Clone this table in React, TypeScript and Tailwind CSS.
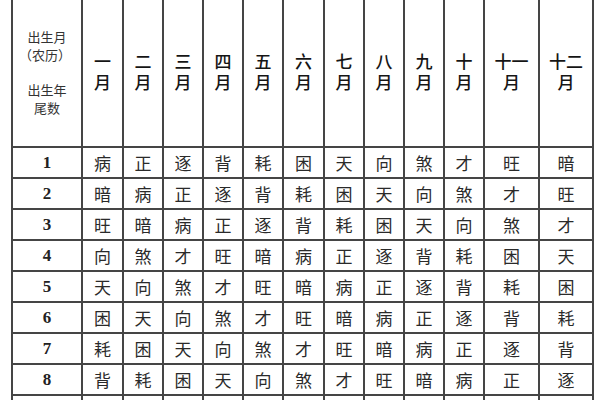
import React from 'react';

// 出生年尾数 × 农历出生月 对照表
const MONTHS: [string, string][] = [
  ['一', '月'],
  ['二', '月'],
  ['三', '月'],
  ['四', '月'],
  ['五', '月'],
  ['六', '月'],
  ['七', '月'],
  ['八', '月'],
  ['九', '月'],
  ['十', '月'],
  ['十一', '月'],
  ['十二', '月'],
];

const ROWS: string[][] = [
  ['病', '正', '逐', '背', '耗', '困', '天', '向', '煞', '才', '旺', '暗'],
  ['暗', '病', '正', '逐', '背', '耗', '困', '天', '向', '煞', '才', '旺'],
  ['旺', '暗', '病', '正', '逐', '背', '耗', '困', '天', '向', '煞', '才'],
  ['向', '煞', '才', '旺', '暗', '病', '正', '逐', '背', '耗', '困', '天'],
  ['天', '向', '煞', '才', '旺', '暗', '病', '正', '逐', '背', '耗', '困'],
  ['困', '天', '向', '煞', '才', '旺', '暗', '病', '正', '逐', '背', '耗'],
  ['耗', '困', '天', '向', '煞', '才', '旺', '暗', '病', '正', '逐', '背'],
  ['背', '耗', '困', '天', '向', '煞', '才', '旺', '暗', '病', '正', '逐'],
  ['逐', '背', '耗', '困', '天', '向', '煞', '才', '旺', '暗', '病', '正'],
];

const CJK = "font-['Noto_Sans_CJK_SC','Noto_Sans_CJK_JP',sans-serif]";

export default function App() {
  return (
    <div className="w-[600px] h-[400px] overflow-hidden bg-white">
      <div className="ml-[11px] w-[583px] bg-[#454545] px-[2px] pb-[2px]">
        <div className="grid grid-cols-[68px_39px_38px_38px_38px_38px_39px_38px_38px_38px_38px_53px_52px] grid-rows-[146px] auto-rows-[29px] gap-[2px]">
          <div
            className={`bg-white flex flex-col items-center text-[13px] leading-[18px] text-[#333] pt-[28px] ${CJK}`}
          >
            <span>出生月</span>
            <span className="-ml-[4px]">（农历）</span>
            <span className="mt-[17px]">出生年</span>
            <span>尾数</span>
          </div>
          {MONTHS.map(([num, yue]) => (
            <div
              key={num}
              className={`bg-white flex flex-col items-center justify-center pb-[4px] text-[17px] leading-[21px] font-medium text-[#151515] ${CJK}`}
            >
              <span>{num}</span>
              <span>{yue}</span>
            </div>
          ))}
          {ROWS.map((row, i) => (
            <React.Fragment key={i}>
              <div className="bg-white flex items-center justify-center font-['Liberation_Serif',serif] font-bold text-[17px] text-[#222]">
                {i + 1}
              </div>
              {row.map((c, j) => (
                <div
                  key={j}
                  className={`bg-white flex items-center justify-center text-[17px] text-[#2a2a2a] ${CJK}`}
                >
                  {c}
                </div>
              ))}
            </React.Fragment>
          ))}
        </div>
      </div>
    </div>
  );
}
